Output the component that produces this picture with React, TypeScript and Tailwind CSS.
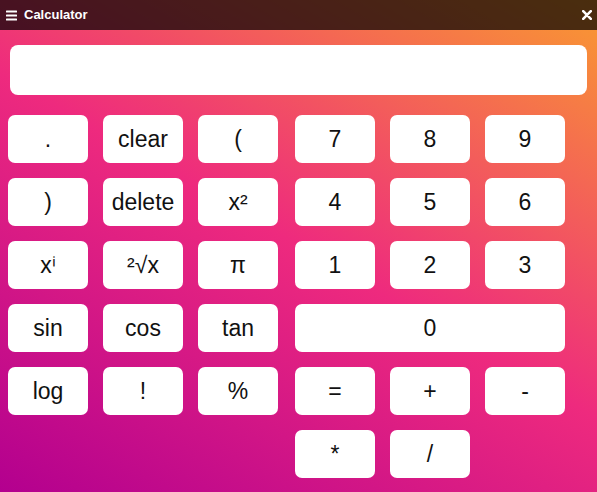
import React from "react";

const leftKeys = [".", "clear", "(", ")", "delete", "x²", "xⁱ", "²√x", "π", "sin", "cos", "tan", "log", "!", "%"];
const rightKeys = ["7", "8", "9", "4", "5", "6", "1", "2", "3", "0", "=", "+", "-", "*", "/"];

function Key({ label, wide }: { label: string; wide?: boolean }) {
  return (
    <button
      className={`h-[48px] rounded-[7px] bg-white text-[23px] leading-none text-[#111] flex items-center justify-center ${
        wide ? "col-span-3" : ""
      }`}
    >
      {label}
    </button>
  );
}

export default function App() {
  return (
    <div
      className="w-[597px] h-[492px] overflow-hidden flex flex-col"
      style={{
        fontFamily: '"Liberation Sans", Arial, sans-serif',
        background: "linear-gradient(30deg, #b3008f 0%, #ee2a7e 50%, #f99a30 100%)",
      }}
    >
      {/* title bar */}
      <div className="h-[30px] bg-black/70 flex items-center pl-[6px] pr-[5px] text-white">
        <svg width="11" height="11" viewBox="0 0 11 11" className="mr-[7px]">
          <rect x="0" y="0.5" width="11" height="2" rx="0.5" fill="white" />
          <rect x="0" y="4.5" width="11" height="2" rx="0.5" fill="white" />
          <rect x="0" y="8.5" width="11" height="2" rx="0.5" fill="white" />
        </svg>
        <span className="text-[13px] font-bold">Calculator</span>
        <svg width="10" height="10" viewBox="0 0 10 10" className="ml-auto">
          <path d="M1.2 1.2 L8.8 8.8 M8.8 1.2 L1.2 8.8" stroke="white" strokeWidth="2.6" strokeLinecap="round" />
        </svg>
      </div>

      {/* display */}
      <div className="mx-[10px] mt-[15px] h-[50px] rounded-lg bg-white" />

      {/* keys */}
      <div className="flex items-start pl-[8px] mt-[20px]">
        <div className="grid grid-cols-3 w-[270px] gap-[15px]">
          {leftKeys.map((k) => (
            <Key key={k} label={k} />
          ))}
        </div>
        <div className="grid grid-cols-3 w-[270px] gap-[15px] ml-[17px]">
          {rightKeys.map((k) => (
            <Key key={k} label={k} wide={k === "0"} />
          ))}
        </div>
      </div>
    </div>
  );
}
